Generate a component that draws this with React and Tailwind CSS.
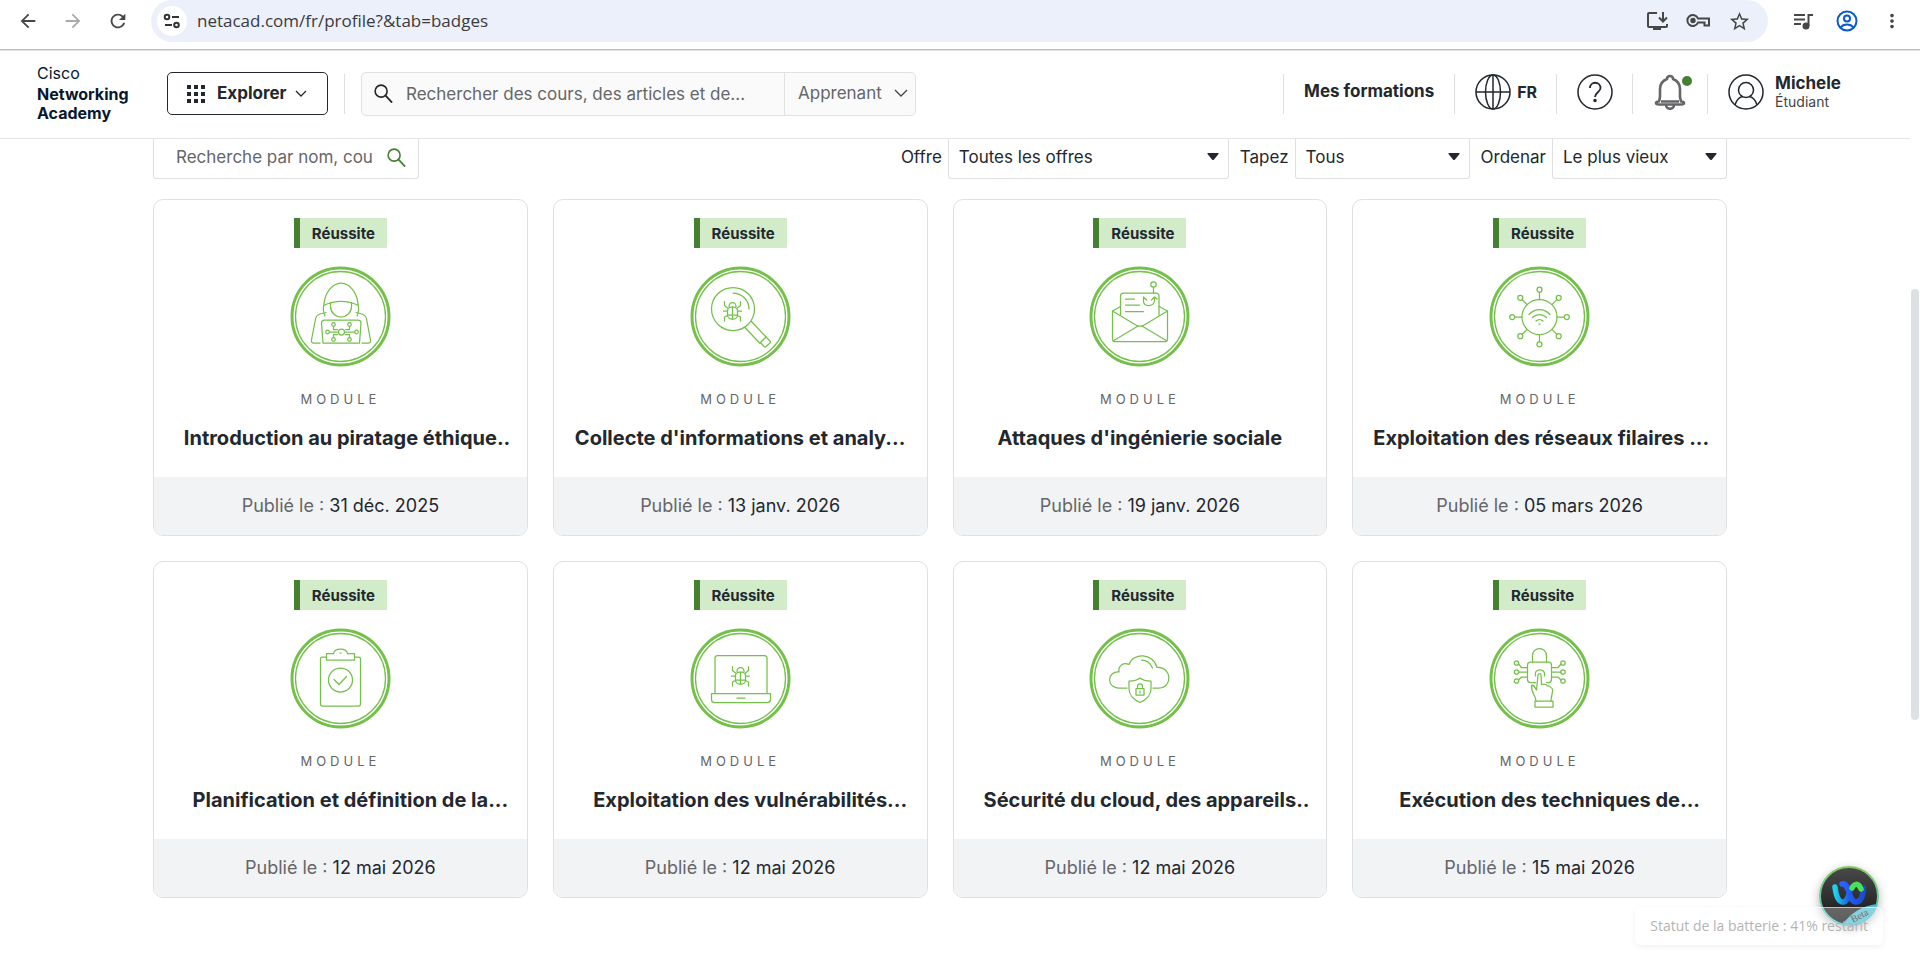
import React from 'react';
import { MdArrowBack, MdArrowForward, MdRefresh, MdMoreVert, MdStarBorder } from 'react-icons/md';

const GREEN = '#74c04b';

function Bug({ x, y }) {
  return (
    <g transform={`translate(${x} ${y})`}>
      <rect x="-5" y="-4" width="10" height="12" rx="4" />
      <path d="M-3.5 -4.5a3.5 4 0 0 1 7 0M0 -4v12M-5 4h10M-5 0h-4M5 0h4M-5 -3l-3 -2.500v-4M5 -3l3 -2.500v-4M-5 4.500l-3 1.500v4M5 4.500l3 1.500v4" />
    </g>
  );
}

const drawings = {
  hacker: (
    <>
      <path d="M34.500 50c-2-4-2-8-1-12 1-11 8-21 17-21s16 10 17 21c1 4 1 8-1 12" />
      <path d="M34 39c10-5 23-5 33 0" />
      <path d="M40 36.500v4a10.500 10.500 0 0 0 21 0v-4" />
      <path d="M29.500 77h-6c-2 0-3-1-2.500-3l4-21c.5-3 2-4 4.500-5l6-1.500M71.500 77h6c2 0 3-1 2.500-3l-4-21c-.5-3-2-4-4.500-5l-6-1.500" />
      <path d="M32.500 77l-1.500-20c0-2 1-3 3-3h33.500c2 0 3 1 3 3l-1.500 20z" />
      <circle cx="51" cy="66" r="3" />
      <circle cx="37" cy="66" r="1.800" />
      <circle cx="66" cy="66" r="1.800" />
      <circle cx="43" cy="58.500" r="1.800" />
      <circle cx="59" cy="58.500" r="1.800" />
      <circle cx="43" cy="73.500" r="1.800" />
      <circle cx="59" cy="73.500" r="1.800" />
      <path d="M39 66h8M55 66h9M43 60.500v3h4M59 60.500v3h-4M43 71.500v-3h4M59 71.500v-3h-4" />
    </>
  ),
  magnifier: (
    <>
      <circle cx="42.500" cy="43" r="21.500" />
      <path d="M42.500 27a16 16 0 0 1 16 16" />
      <Bug x={42} y={45} />
      <path d="M54.500 61.500l15 16M61 55.500l15 16" />
      <path d="M70 76.500l5.500-5.500 4 4q1 1 0 2l-4 3.500q-1 1-2 0z" />
    </>
  ),
  phishing: (
    <>
      <path d="M31 49v-19c0-2 1-3 3-3h32c2 0 3.500 1 3.500 3v19" />
      <path d="M31 40.500l-8 4.500 25 15h5l25-15-8.500-4.500" />
      <path d="M23 45v28c0 2 .5 2.500 2 2.500h51c1.500 0 2-.5 2-2.500v-28M23.500 75l25-15M77.500 75l-25-15" />
      <path d="M36 33h9M36 39h14M36 45.500h18" />
      <circle cx="64" cy="18.500" r="2.700" />
      <path d="M64 21v6M54 31v4c0 6 10 6 11 0v-4l-3 3M65 31l2.500 2M54 31l3 3" />
    </>
  ),
  network: (
    <>
      <circle cx="50" cy="51" r="17.500" />
      <path d="M50 33.500v-7M50 68.500v7M32.500 51h-7M67.500 51h7M37.600 38.600l-5-5M62.400 38.600l5-5M37.600 63.400l-5 5M62.400 63.400l5 5" />
      <circle cx="50" cy="23.700" r="2.500" />
      <circle cx="50" cy="78.300" r="2.500" />
      <circle cx="22.700" cy="51" r="2.500" />
      <circle cx="77.300" cy="51" r="2.500" />
      <circle cx="30.800" cy="31.800" r="2.500" />
      <circle cx="69.200" cy="31.800" r="2.500" />
      <circle cx="30.800" cy="70.200" r="2.500" />
      <circle cx="69.200" cy="70.200" r="2.500" />
      <path d="M39.500 48.500c6-6.500 15-6.500 21 0M43 51.500c4-4 10-4 14 0M46.500 55c2-2 5-2 7 0M49.500 58h1" />
    </>
  ),
  clipboard: (
    <>
      <path d="M36 29h-4c-1.500 0-2 .5-2 2v45c0 1.500.5 2 2 2h36c1.500 0 2-.5 2-2v-45c0-1.500-.5-2-2-2h-4" />
      <path d="M36 32v-6.500h7c1-6 13-6 14 0h7v6.500zM49.500 25h1" />
      <circle cx="50" cy="52" r="12" />
      <path d="M43.500 51.500l5 5 7.500-8" />
    </>
  ),
  laptop: (
    <>
      <path d="M24.500 65v-35c0-1.500 1-2.500 2.500-2.500h47c1.500 0 2.500 1 2.500 2.500v35" />
      <path d="M21 65.500h59v6c0 2-1 3-3 3h-53c-2 0-3-1-3-3zM46.500 70h8" />
      <Bug x={50} y={48} />
    </>
  ),
  cloud: (
    <>
      <path d="M37.500 60h-8c-13 0-12-17 0-16-1-7 5-10 10-7.500 4-12 24-12 28 3 15-1 16 20.500 2 20.500h-6" />
      <path d="M52 32c6 0 9 3 11 8" />
      <path d="M50.500 50c-3 2.500-7 3-11 3v8c0 6 5 11 11 13.500 6-2.500 11-7.500 11-13.500v-8c-4 0-8-.5-11-3z" />
      <rect x="46.500" y="60.500" width="8" height="6.500" />
      <path d="M48 60v-2c0-3 5-3 5 0v2M50.500 63v2" />
    </>
  ),
  touch: (
    <>
      <path d="M43 34v-6c0-10 14-10 14 0v6" />
      <path d="M46 54.500h-5c-2 0-3-1-3-3v-14.500c0-2 1-3 3-3h18c2 0 3 1 3 3v14.500c0 2-1 3-3 3h-2" />
      <path d="M46 48c-2.500-8 11-8.500 9 0" />
      <circle cx="27" cy="35" r="2.200" />
      <circle cx="27" cy="44" r="2.200" />
      <circle cx="27" cy="53" r="2.200" />
      <circle cx="73.500" cy="35" r="2.200" />
      <circle cx="73.500" cy="44" r="2.200" />
      <circle cx="73.500" cy="53" r="2.200" />
      <path d="M29 36l3 3.500h6M29 44h9M29 52l3-3h6M71.500 36l-3 3.500h-6.500M71.500 44h-9.500M71.500 52l-3-3h-6.500" />
      <path d="M46.500 73c0-5-5-8-4.500-15.500 2-1 3 1 5 4.500l1.500-15c.5-2 3-2 3 0l.5 9.500c5-1.500 5 1 6 1.500 3-.5 3 1.500 4 2 3 1-.5 7-.5 13" />
      <rect x="45.500" y="73" width="18" height="6" />
    </>
  ),
};

function BadgeIcon({ name }) {
  return (
    <svg width="101" height="101" viewBox="0 0 100 101" fill="none" stroke={GREEN} strokeLinecap="round" strokeLinejoin="round" aria-hidden="true">
      <circle cx="50" cy="50.500" r="48.500" strokeWidth="3" />
      <circle cx="50" cy="50.500" r="45" strokeWidth="1.300" />
      <g strokeWidth="1.250">{drawings[name]}</g>
    </svg>
  );
}

// `dots` hang after the centered line and take no width
const badges = [
  { title: 'Introduction au piratage éthique', dots: '..', date: '31 déc. 2025', icon: 'hacker' },
  { title: "Collecte d'informations et analy...", date: '13 janv. 2026', icon: 'magnifier' },
  { title: "Attaques d'ingénierie sociale", date: '19 janv. 2026', icon: 'phishing' },
  { title: 'Exploitation des réseaux filaires ...', date: '05 mars 2026', icon: 'network' },
  { title: 'Planification et définition de la', dots: '...', date: '12 mai 2026', icon: 'clipboard' },
  { title: 'Exploitation des vulnérabilités', dots: '...', date: '12 mai 2026', icon: 'laptop' },
  { title: 'Sécurité du cloud, des appareils', dots: '..', date: '12 mai 2026', icon: 'cloud' },
  { title: 'Exécution des techniques de', dots: '...', date: '15 mai 2026', icon: 'touch' },
];

function BadgeCard({ badge }) {
  return (
    <article className="flex flex-col overflow-hidden rounded-[10px] border border-[#dee0e3] bg-white">
      <div className="flex flex-col items-center px-5 pt-[18px] pb-6">
        <span className="h-[30px] border-l-6 border-[#477f33] bg-[#d2ecc9] px-3 text-[15px] leading-[31px] font-bold text-[#23282e]">
          Réussite
        </span>
        <div className="mt-[18px]">
          <BadgeIcon name={badge.icon} />
        </div>
        <p className="mt-[22px] text-[13px] leading-5 tracking-[4px] text-[#656668]">MODULE</p>
        <h3 className="mt-3.5 w-full text-center text-xl leading-[30px] font-bold whitespace-nowrap text-[#23282e]">
          {badge.title}
          {badge.dots && <span className="inline-flex w-0">{badge.dots}</span>}
        </h3>
      </div>
      <div className="bg-[#f2f3f5] py-4 text-center text-lg leading-[26px] text-[#656668]">
        Publié le : <span className="text-[#23282e]">{badge.date}</span>
      </div>
    </article>
  );
}

function SearchIcon({ className }) {
  return (
    <svg className={className} viewBox="0 0 20 20" fill="none" stroke="currentColor" strokeWidth="1.700" aria-hidden="true">
      <circle cx="7.500" cy="7.500" r="6.300" />
      <path d="M12 12l7 7.500" strokeWidth="2" />
    </svg>
  );
}

function BrowserBar() {
  return (
    <div className="flex h-[50px] items-start border-b border-[#bdbdbd] bg-white pr-[17px] pl-[17px] text-[#474747]">
      <div className="flex h-[42px] items-center gap-[23px]">
        <button aria-label="Retour"><MdArrowBack size={22} /></button>
        <button aria-label="Suivant" className="text-[#a9a9a9]"><MdArrowForward size={22} /></button>
        <button aria-label="Actualiser"><MdRefresh size={22} /></button>
      </div>
      <div className="ml-[22px] flex h-[42px] flex-1 items-center rounded-[21px] bg-[#ecf0fa] pr-[17px] pl-1.5">
        <button aria-label="Informations sur le site" className="flex size-[30px] items-center justify-center rounded-full bg-white">
          <svg width="18" height="16" viewBox="0 0 18 16" fill="none" stroke="#333" strokeWidth="2" aria-hidden="true">
            <circle cx="4" cy="4" r="2.300" />
            <path d="M9 4h7M2 12h7" />
            <circle cx="13.500" cy="12" r="2.300" />
          </svg>
        </button>
        <input
          aria-label="Adresse"
          className="ml-2.5 min-w-0 flex-1 bg-transparent font-['Open_Sans',sans-serif] text-[17px] text-[#3a3b3d] outline-none"
          defaultValue="netacad.com/fr/profile?&tab=badges"
        />
        <div className="flex items-center gap-[18px]">
          <svg width="22" height="24" viewBox="0 0 22 24" fill="none" stroke="currentColor" strokeWidth="2" aria-hidden="true">
            <path d="M11 4H3q-1 0-1 1v12q0 1 1 1h17q1 0 1-1v-2M17 3v9M13 8.500l4 4 4-4" />
            <path d="M7 18h8v3H7z" fill="currentColor" stroke="none" />
          </svg>
          <svg width="24" height="16" viewBox="0 0 24 16" fill="none" stroke="currentColor" strokeWidth="2" aria-hidden="true">
            <path d="M12 5.500h11v7h-4.500v-3H12a5.500 5.500 0 1 1 0-4z" />
            <circle cx="7" cy="7.500" r="1.700" fill="currentColor" />
          </svg>
          <MdStarBorder size={23} />
        </div>
      </div>
      <div className="flex h-[42px] items-center gap-[23px] pl-[25px]">
        <svg width="20" height="18" viewBox="0 0 20 18" fill="none" stroke="currentColor" strokeWidth="2" aria-hidden="true">
          <path d="M1 3h11M1 7.500h11M1 12h7M15.500 14V3H20" />
          <circle cx="13" cy="14" r="2.500" fill="currentColor" />
        </svg>
        <svg width="22" height="22" viewBox="0 0 22 22" fill="none" stroke="#0b57d0" strokeWidth="2" aria-hidden="true">
          <circle cx="11" cy="11" r="9.500" />
          <circle cx="11" cy="8.500" r="3" />
          <path d="M4.500 17.500c3-4 10-4 13 0" />
        </svg>
        <button aria-label="Menu"><MdMoreVert size={22} /></button>
      </div>
    </div>
  );
}

function SiteHeader() {
  return (
    <header className="mr-2.5 flex h-[88px] items-center border-b border-[#e6e6e6] bg-white pr-[69px] pb-0.5 pl-[37px] text-[#23282e]">
      <a href="#accueil" className="w-[130px] pb-1 text-base text-[#07182d]">
        <span className="block leading-6">Cisco</span>
        <span className="block leading-[19px] font-bold">Networking Academy</span>
      </a>
      <button className="flex h-[43px] w-[161px] shrink-0 items-center rounded-[5px] border border-[#23282e] pl-[19px] text-[17px] font-bold">
        <svg width="18" height="18" viewBox="0 0 18 18" fill="currentColor" className="mr-3" aria-hidden="true">
          <path d="M0 0h4v4H0zM7 0h4v4H7zM14 0h4v4h-4zM0 7h4v4H0zM7 7h4v4H7zM14 7h4v4h-4zM0 14h4v4H0zM7 14h4v4H7zM14 14h4v4h-4z" />
        </svg>
        Explorer
        <svg width="12" height="8" viewBox="0 0 12 8" fill="none" stroke="currentColor" strokeWidth="1.300" className="ml-2" aria-hidden="true">
          <path d="M1 1l5 5 5-5" />
        </svg>
      </button>
      <span className="mx-4 h-10 w-px bg-[#e0e0e0]" />
      <div className="flex h-11 w-[555px] items-center rounded-[5px] border border-[#e0e1e2] bg-[#fafafa] text-[17px] text-[#656668]">
        <SearchIcon className="ml-3 size-[19px] text-[#23282e]" />
        <input
          aria-label="Rechercher"
          className="ml-[13px] h-full min-w-0 flex-1 bg-transparent outline-none placeholder:text-[#656668]"
          placeholder="Rechercher des cours, des articles et de..."
        />
        <button className="flex h-full w-[131px] items-center border-l border-[#e0e1e2] pl-[13px]">
          Apprenant
          <svg width="14" height="9" viewBox="0 0 14 9" fill="none" stroke="#444" strokeWidth="1.300" className="ml-3" aria-hidden="true">
            <path d="M1 1l6 6 6-6" />
          </svg>
        </button>
      </div>
      <nav className="ml-auto flex h-10 items-stretch divide-x divide-[#e0e0e0] border-l border-[#e0e0e0]">
        <a href="#formations" className="flex items-center px-5 pb-1 text-[17px] font-bold">Mes formations</a>
        <button className="flex items-center gap-1.5 pr-[19px] pb-1 pl-5 text-base font-bold">
          <svg width="36" height="36" viewBox="0 0 36 36" fill="none" stroke="currentColor" strokeWidth="1.500" aria-hidden="true">
            <circle cx="18" cy="18" r="17" />
            <ellipse cx="18" cy="18" rx="7.500" ry="17" />
            <path d="M18 1v34M1 18h34" />
          </svg>
          FR
        </button>
        <button aria-label="Aide" className="pr-[19px] pb-1 pl-5">
          <svg width="36" height="36" viewBox="0 0 36 36" fill="none" stroke="currentColor" strokeWidth="1.500" aria-hidden="true">
            <circle cx="18" cy="18" r="17" />
            <path d="M13 14c0-7 10.500-7 10.500 0 0 4-5.500 4.500-5.500 9" strokeWidth="1.800" />
            <circle cx="18" cy="26.500" r="1" fill="currentColor" />
          </svg>
        </button>
        <button aria-label="Notifications" className="relative px-5 pb-1">
          <svg width="34" height="36" viewBox="0 0 34 36" fill="none" stroke="#656668" strokeWidth="2.600" strokeLinejoin="round" aria-hidden="true">
            <path d="M17 2c-2 0-3 1.500-3 3-5 2-7 6-7 10v8l-1 4.500c-4 0-4 3 0 3h22c4 0 4-3 0-3L27 23v-8c0-4-2-8-7-10 0-1.500-1-3-3-3zM8 27.500h18M13 31c0 5 8 5 8 0" />
          </svg>
          <span className="absolute top-0.5 right-[15px] size-2.5 rounded-full bg-[#477f33]" />
        </button>
        <button className="flex items-center gap-[11px] pb-1 pl-5 text-left">
          <svg width="36" height="36" viewBox="0 0 36 36" fill="none" stroke="currentColor" strokeWidth="1.500" aria-hidden="true">
            <circle cx="18" cy="18" r="17" />
            <circle cx="18" cy="16" r="7.500" />
            <path d="M7 31c1.500-5 4-8 8-8.500M29 31c-1.500-5-4-8-8-8.500" />
          </svg>
          <span>
            <span className="block text-[17px] leading-5 font-bold">Michele</span>
            <span className="block text-sm leading-[18px] text-[#444]">Étudiant</span>
          </span>
        </button>
      </nav>
    </header>
  );
}

function FilterSelect({ id, label, value, className }) {
  return (
    <div className="flex items-center gap-1.5">
      <label htmlFor={id} className="pb-0.5">{label}</label>
      <div className={`relative ${className}`}>
        <select id={id} className="h-10 w-full appearance-none rounded-b-[3px] border border-t-0 border-[#dee0e3] bg-white px-2.5 pb-0.5">
          <option>{value}</option>
        </select>
        <svg width="12" height="7" viewBox="0 0 12 7" className="pointer-events-none absolute top-[14px] right-2.5" aria-hidden="true">
          <path d="M1 0h10q1 0 .5 1l-4.500 5.500q-1 1-2 0l-4.500-5.500q-.5-1 .5-1z" fill="#23282e" />
        </svg>
      </div>
    </div>
  );
}

function Filters() {
  return (
    <div className="flex items-start justify-between text-[17px] text-[#23282e]">
      <div className="flex h-10 w-[266px] items-center rounded-b-[3px] border border-t-0 border-[#dee0e3] pr-3 pb-0.5 pl-[22px]">
        <input
          aria-label="Recherche par nom"
          className="min-w-0 flex-1 bg-transparent outline-none placeholder:text-[#656668]"
          placeholder="Recherche par nom, cou"
        />
        <SearchIcon className="ml-2 size-[19px] text-[#477f33]" />
      </div>
      <div className="flex gap-[11px]">
        <FilterSelect id="offre" label="Offre" value="Toutes les offres" className="w-[281px]" />
        <FilterSelect id="type" label="Tapez" value="Tous" className="w-[175px]" />
        <FilterSelect id="tri" label="Ordenar" value="Le plus vieux" className="w-[175px]" />
      </div>
    </div>
  );
}

function Assistant() {
  return (
    <div className="absolute right-[37px] bottom-[13px] flex flex-col items-end">
      <button aria-label="Webex" className="mr-1 -mb-[19px] rounded-full shadow-[0_3px_10px_rgba(0,0,0,0.3)]">
        <svg width="60" height="60" viewBox="0 0 60 60" fill="none" aria-hidden="true">
          <defs>
            <linearGradient id="rim" x1="0" y1="0" x2="0" y2="1">
              <stop stopColor="#86c95c" />
              <stop offset="1" stopColor="#58c7cf" />
            </linearGradient>
            <linearGradient id="dark" x1="0" y1="0" x2="0" y2="1">
              <stop stopColor="#4a4a4a" />
              <stop offset="1" stopColor="#161616" />
            </linearGradient>
            <linearGradient id="left" x1="0" y1="0" x2="1" y2="0">
              <stop stopColor="#1fd3f0" />
              <stop offset="1" stopColor="#1450e0" />
            </linearGradient>
            <linearGradient id="right" x1="0" y1="0" x2="1" y2="0">
              <stop stopColor="#2a63ff" />
              <stop offset="1" stopColor="#1a4bd0" />
            </linearGradient>
            <clipPath id="disc"><circle cx="30" cy="30" r="30" /></clipPath>
          </defs>
          <circle cx="30" cy="30" r="29" fill="url(#dark)" stroke="url(#rim)" strokeWidth="2" />
          <g strokeWidth="5.500" strokeLinecap="round">
            <path d="M16 21c1 8 3 15 8 15 5 0 6-9 8-14" stroke="url(#left)" />
            <path d="M23 18c8-2 6 18 14 18 5 0 7-7 7.500-14" stroke="url(#right)" />
            <path d="M33 22c2-4 6-6 9 1" stroke="#4be05a" />
          </g>
          <g clipPath="url(#disc)">
            <path d="M22 60c9-12 20-21 38-22v22z" fill="#55bdd0" />
          </g>
          <text x="34" y="57" transform="rotate(-28 34 57)" fontFamily="Liberation Serif" fontSize="10" fill="#333">Beta</text>
        </svg>
      </button>
      <p className="relative rounded-md border border-white/60 bg-white/30 px-[14px] py-[7px] font-['Open_Sans',sans-serif] text-sm leading-[22px] text-[#b4b4b4] shadow-[0_2px_6px_rgba(0,0,0,0.06)]">
        Statut de la batterie : 41% restant
      </p>
    </div>
  );
}

export default function App() {
  return (
    <div className="relative flex min-h-screen flex-col bg-white font-[Inter,sans-serif]">
      <BrowserBar />
      <div className="relative flex-1 border-t border-[#e2e2e2]">
        <SiteHeader />
        <main className="pr-[193px] pb-[60px] pl-[153px]">
          <Filters />
          <section className="mt-5 grid grid-cols-4 gap-[25px]">
            {badges.map((badge, i) => (
              <BadgeCard key={i} badge={badge} />
            ))}
          </section>
        </main>
        {/* page scrollbar thumb */}
        <div className="absolute top-[238px] right-px h-[431px] w-2 rounded-full bg-[#dde1e6]" />
      </div>
      <Assistant />
    </div>
  );
}
